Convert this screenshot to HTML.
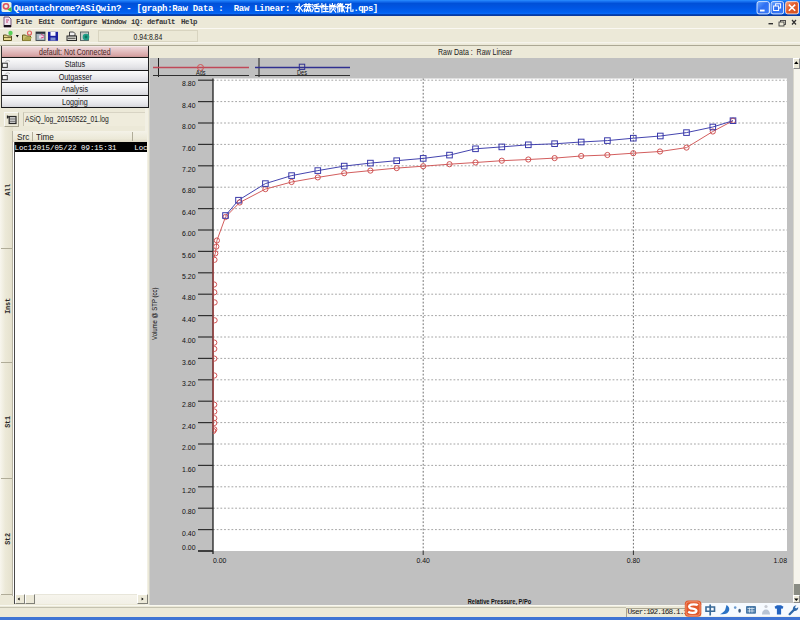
<!DOCTYPE html>
<html><head><meta charset="utf-8">
<style>
*{margin:0;padding:0;box-sizing:border-box}
html,body{width:800px;height:620px;overflow:hidden;background:#ece9d8;font-family:"Liberation Sans",sans-serif;position:relative}
.a{position:absolute}
#title{left:0;top:0;width:800px;height:15.5px;background:linear-gradient(#2a8eff 0px,#1670f0 1.5px,#0050d8 3.5px,#0056e4 8px,#0060f0 12px,#0868f6 13.5px,#0040b0 14.6px,#0a3aa0 15.5px)}
#ttext{left:13.5px;top:2.5px;font-family:"Liberation Mono",monospace;font-weight:bold;font-size:9px;line-height:13px;color:#fff;white-space:pre;letter-spacing:-0.28px}
.tbtn{top:1.5px;width:13px;height:12.5px;border:1px solid #e8f0ff;border-radius:2px;background:linear-gradient(135deg,#5b9bff,#1e5ee8)}
#menubar{left:0;top:15.5px;width:800px;height:13.5px;background:#ece9d8}
.mn{top:15.3px;font-family:"Liberation Mono",monospace;font-weight:bold;font-size:7.4px;line-height:14px;color:#383838;white-space:pre;letter-spacing:-0.44px}
#toolbar{left:0;top:29px;width:800px;height:17px;background:linear-gradient(#ece9d8 13px,#f6f4ec 13.5px,#ece9d8 15px);border-bottom:1px solid #aca894}
.btn{left:0.8px;width:148.4px;height:12.5px;border-left:1.2px solid #303030;border-right:1.4px solid #202020;border-bottom:1.3px solid #181818;background:linear-gradient(#fbfbfb,#f0f0f2 40%,#e2e2e6 80%,#d4d4d8);text-align:center;line-height:8.6px}
.cx{display:inline-block;font-size:8.4px;color:#202020;transform:scaleX(.86);transform-origin:50% 50%;white-space:pre}
div.a.cx{transform-origin:0 50%}
.tab{font-family:"Liberation Mono",monospace;font-weight:bold;font-size:6.8px;color:#282828;white-space:pre;transform:translate(-50%,-50%) rotate(-90deg);letter-spacing:-0.2px}
.sbb{border:1px solid #fff;border-right-color:#808078;border-bottom-color:#808078;background:#ece9d8}
.lbl{font-size:7.6px;color:#202020}
svg text.al{font-family:"Liberation Sans",sans-serif;font-size:6.9px;font-weight:normal;fill:#101010}
svg text.b{font-weight:bold}
</style></head><body>
<div class="a" id="title"></div>

<div class="a" id="ttext">Quantachrome?ASiQwin? - [graph:Raw Data :  Raw Linear: </div>
<div class="a tbtn" style="left:757px"></div>
<div class="a tbtn" style="left:771px"></div>
<div class="a tbtn" style="left:785.5px;background:linear-gradient(135deg,#f08050,#d84818)"></div>

<div class="a" id="menubar"></div>
<div class="a mn" style="left:16px">File</div>
<div class="a mn" style="left:38.5px">Edit</div>
<div class="a mn" style="left:61px">Configure</div>
<div class="a mn" style="left:102px">Window</div>
<div class="a mn" style="left:131px">iQ: default</div>
<div class="a mn" style="left:181px">Help</div>

<div class="a" id="toolbar"></div>
<div class="a" style="left:0;top:28.3px;width:800px;height:0.8px;background:#faf8f2"></div>
<svg class="a" style="left:0;top:0" width="800" height="46" viewBox="0 0 800 46">
<!-- app icon -->
<rect x="1.5" y="2" width="10" height="10" rx="1.5" fill="#e8f4e8"/>
<path d="M7 9.5 L11.5 12 L11.5 7 Z" fill="#40c040"/>
<circle cx="6" cy="6.3" r="2.6" fill="none" stroke="#e05060" stroke-width="1.6"/>
<!-- CJK approximations -->
<g fill="none" stroke="#fff" stroke-width="1.15" stroke-linecap="square">
<path transform="translate(295.2 3.6)" d="M4 0.5v7.5l-1-0.8M0.5 3h2.5l-2.5 3.5M7.5 2l-2.3 1.8M4.3 3.5l3.2 4"/>
<path transform="translate(303.5 3.6)" d="M0.5 1h7M2.5 0v2M5.5 0v2M1 2.8h6l-1.5 1.3M4 3v3.5l-0.8-0.5M1.8 4.2l-1 1.5M6 4.2l1.2 1.5M0.6 6.5h6.8M1 8l0.5-0.8M3 8l0.3-0.8M5 7.2l0.3 0.8M7 7.2l0.5 0.8"/>
<path transform="translate(311.8 3.6)" d="M0.5 0.8l1 0.8M0.3 3.2l1 0.8M0.3 8l1.3-2.8M6.8 0.3l-4 1M2.5 2.8h5.5M5 1v3M3.2 4.8h4v3.2h-4z"/>
<path transform="translate(320.1 3.6)" d="M1.8 0v8.5M0.4 2.5l0.6 1.5M3 2l-0.6 1.2M4 1.5l-0.8 2M3.5 3h4.3M5.6 0.5v7.5M3.8 5.3h3.8M3.2 8h5"/>
<path transform="translate(328.4 3.6)" d="M4 0v2M1.5 0.8v1.2h5v-1.2M0.8 3h7M1.5 3v5.5M4.8 3.5v1.8l-2.2 3.2M4.8 5.3l2.5 3.2M3 4.5l-0.5 1M6.5 4.5l0.5 1"/>
<path transform="translate(336.7 3.6)" d="M1.5 0l-1.2 1.5M1.8 2l-1.5 2M1.2 3.3v5.2M2.6 0.5v1.5h2.2v-1.5M3.7 0v2M2.4 3h2.6M2.8 4.5v3.5M4.5 4.5v3M6 0.3l-0.8 2.5h2.8M6.8 2.8l-1.5 5.5M5.6 4.3l2.2 4"/>
<path transform="translate(345.0 3.6)" d="M0.6 0.8h4l-2 1.8M2.6 2.6v5.6l-1-0.6M0.3 4.3h4.5M5.8 0v7.6h2.2v-1.5"/>
</g>
<text x="353.5" y="10.8" font-family="Liberation Mono" font-weight="bold" font-size="9" letter-spacing="-0.6" fill="#fff">.qps]</text>
<!-- title buttons -->
<defs>
<linearGradient id="gb" x1="0" y1="0" x2="1" y2="1"><stop offset="0" stop-color="#6aa8ff"/><stop offset=".45" stop-color="#2f6ff2"/><stop offset="1" stop-color="#3a7cf8"/></linearGradient>
<linearGradient id="gr" x1="0" y1="0" x2="1" y2="1"><stop offset="0" stop-color="#f4a080"/><stop offset=".45" stop-color="#e25a28"/><stop offset="1" stop-color="#d05020"/></linearGradient>
</defs>
<rect x="757" y="1.6" width="12.3" height="12.3" rx="2" fill="url(#gb)" stroke="#e0ecff" stroke-width="0.9"/>
<rect x="760" y="9.6" width="4.6" height="1.9" fill="#fff"/>
<rect x="771" y="1.6" width="12.6" height="12.3" rx="2" fill="url(#gb)" stroke="#e0ecff" stroke-width="0.9"/>
<rect x="775.6" y="3.8" width="5" height="4.2" fill="none" stroke="#fff" stroke-width="1"/>
<rect x="773.6" y="6" width="5" height="4.5" fill="#3070f0" stroke="#fff" stroke-width="1"/>
<rect x="785.6" y="1.6" width="12.8" height="12.3" rx="2" fill="url(#gr)" stroke="#f8e0d8" stroke-width="0.9"/>
<path d="M788.8 4.6l6.4 6.2M795.2 4.6l-6.4 6.2" stroke="#fff" stroke-width="1.6"/>
<!-- menu icon -->
<path d="M4 17h5l2 2v8h-7z" fill="#f0e4f0" stroke="#503060" stroke-width="0.8"/>
<rect x="4" y="25" width="7" height="2" fill="#181018"/>
<path d="M6 20h3M6 22h2" stroke="#c04070" stroke-width="1"/>
<!-- MDI buttons -->
<rect x="768.5" y="23" width="4.5" height="1.4" fill="#303030"/>
<rect x="780.5" y="20.5" width="5" height="4" fill="none" stroke="#404040" stroke-width="0.9"/>
<rect x="779" y="22" width="5" height="4" fill="#ece9d8" stroke="#404040" stroke-width="0.9"/>
<path d="M792 20l4 4.5M796 20l-4 4.5" stroke="#303030" stroke-width="1.2"/>
<!-- toolbar icons -->
<path d="M3.5 35h3l1 1h4v4.5h-8z" fill="#e8d890" stroke="#58501c" stroke-width="1"/>
<path d="M4 37.5h8" stroke="#58501c" stroke-width="0.8"/>
<circle cx="10.5" cy="33" r="2.2" fill="#58d058"/>
<path d="M15.8 35h3l-1.5 2.6z" fill="#101010"/>
<path d="M22.5 35h3l1 1h4v4.5h-8z" fill="#c8c070" stroke="#686020" stroke-width="1"/>
<path d="M23 40.5l2.5-3.5h6.5l-2 3.5z" fill="#b0a850"/>
<circle cx="29.5" cy="33" r="2" fill="none" stroke="#e06060" stroke-width="1.2"/>
<rect x="36" y="32" width="9" height="8.5" fill="#a8b8c0" stroke="#404850" stroke-width="0.9"/>
<rect x="36" y="32" width="9" height="1.8" fill="#283038"/>
<path d="M39 35.5h5v3h-5z" fill="#f0d8e8"/>
<path d="M41 34l3 2M41 38l3-1" stroke="#d04080" stroke-width="0.9"/>
<rect x="48" y="31.8" width="10" height="9" fill="#1a20a0"/>
<rect x="50.5" y="32" width="5" height="3.8" fill="#f8f8ff"/>
<rect x="50.5" y="37.5" width="5" height="3" fill="#8090d0"/>
<path d="M69.5 32h4l1.5 1.5v2.5h-5.5z" fill="#f0f0f0" stroke="#303030" stroke-width="0.9"/>
<rect x="67" y="36" width="9.5" height="4.5" fill="#d8d8d0" stroke="#282828" stroke-width="1"/>
<path d="M68 38.3h7.5" stroke="#282828" stroke-width="0.8"/>
<rect x="80.5" y="32" width="8" height="8.5" fill="#c8ccc8" stroke="#506060" stroke-width="0.9"/>
<circle cx="86" cy="37" r="3.3" fill="#20a088"/>
<circle cx="86" cy="37" r="1.4" fill="#107060"/>
</svg>
<div class="a" style="left:98px;top:30px;width:100px;height:12px;border:1px solid #d8d4c0;background:#ebe8d6;text-align:center;line-height:8.4px"><span class="cx" style="font-size:8.6px;transform:scaleX(.8)">0.94:8.84</span></div>

<!-- left panel -->
<div class="a" style="left:0;top:46px;width:149px;height:559px;background:#ece9d8"></div>
<div class="a" style="left:145px;top:108px;width:3px;height:497px;background:#f2f0e4"></div>
<div class="a btn" style="top:45.9px;height:12.1px;background:linear-gradient(#f8f0f0 0px,#ecd4d6 1.5px,#e4c0c2 45%,#d8a6a6 85%,#c89494)"><span class="cx" style="transform:scaleX(.835);color:#4a2424">default: Not Connected</span></div>
<div class="a btn" style="top:58px"><span class="cx">Status</span></div>
<div class="a btn" style="top:70.5px"><span class="cx">Outgasser</span></div>
<div class="a btn" style="top:83px"><span class="cx">Analysis</span></div>
<div class="a btn" style="top:95.5px"><span class="cx">Logging</span></div>
<svg class="a" style="left:0;top:45px" width="20" height="40" viewBox="0 45 20 40">
<rect x="2.3" y="63.2" width="5" height="4.2" fill="#f4f4f4" stroke="#303030" stroke-width="1"/>
<path d="M5 62.5a3 3 0 0 1 5 -1" fill="none" stroke="#b0b0b0" stroke-width="0.8"/>
<rect x="2.3" y="75.5" width="5" height="4.2" fill="#f4f4f4" stroke="#303030" stroke-width="1"/>
<path d="M5 74.8a3 3 0 0 1 5 -1" fill="none" stroke="#b0b0b0" stroke-width="0.8"/>
</svg>

<div class="a" style="left:4px;top:111.5px;width:15px;height:15px;border:1px solid #f8f8f4;border-right-color:#a8a490;border-bottom-color:#a8a490"></div>
<svg class="a" style="left:0;top:106px" width="22" height="22" viewBox="0 106 22 22">
<rect x="9.2" y="116.5" width="6.8" height="7" fill="#d8d8d8" stroke="#282828" stroke-width="1.2"/>
<path d="M7.5 115.5v3M7.5 116.8h2" stroke="#282828" stroke-width="1.3"/>
<path d="M10 119h5.5M10 121.3h5.5" stroke="#505050" stroke-width="0.8"/>
</svg>
<div class="a" style="left:23px;top:112px;width:122px;height:14px;background:#efecdc;border-left:1px solid #c8c4b0;border-top:1px solid #d8d4c4"></div>
<div class="a cx" style="left:24.5px;top:113px;line-height:12px;transform:scaleX(.80)">ASiQ_log_20150522_01.log</div>

<!-- tabs -->
<div class="a" style="left:0;top:127px;width:13px;height:468px;background:linear-gradient(90deg,#f8f6ee,#ece9d8 40%,#e4e0cc)"></div>
<div class="a" style="left:1px;top:247.5px;width:11.5px;height:1.2px;background:#b0ac98"></div>
<div class="a" style="left:1px;top:362px;width:11.5px;height:1.2px;background:#b0ac98"></div>
<div class="a" style="left:1px;top:478px;width:11.5px;height:1.2px;background:#b0ac98"></div>
<div class="a" style="left:1px;top:594px;width:11.5px;height:1.2px;background:#b0ac98"></div>
<div class="a tab" style="left:8px;top:190px">All</div>
<div class="a tab" style="left:8px;top:306px">Inst</div>
<div class="a tab" style="left:8px;top:422px">St1</div>
<div class="a tab" style="left:8px;top:538.5px">St2</div>

<!-- list -->
<div class="a" style="left:12.3px;top:130.5px;width:135px;height:465px;background:#fff;border-left:1px solid #b8b4a4"></div>
<div class="a" style="left:14px;top:141px;width:1.1px;height:463px;background:#484848"></div>
<div class="a" style="left:13px;top:130.5px;width:134px;height:11px;background:linear-gradient(#f4f2e8,#ece9d8 70%,#dedac6)"></div>
<div class="a cx" style="left:17px;top:131.5px;line-height:10px;transform:scaleX(.98)">Src</div>
<div class="a" style="left:32px;top:132px;width:1.2px;height:9px;background:#b0ac98"></div>
<div class="a cx" style="left:36px;top:131.5px;line-height:10px;transform:scaleX(.98)">Time</div>
<div class="a" style="left:132px;top:132px;width:1.2px;height:9px;background:#b0ac98"></div>
<div class="a" style="left:14.7px;top:141.5px;width:132px;height:1px;background:#807c70"></div>
<div class="a" style="left:14.7px;top:142.4px;width:132px;height:10px;background:#000"></div>
<div class="a" style="left:14.5px;top:142.6px;font-family:'Liberation Mono',monospace;font-size:7.4px;line-height:10px;color:#fff;white-space:pre;font-weight:normal;letter-spacing:0px">Loc12015/05/22 09:15:31    Loc</div>

<!-- list h scrollbar -->
<div class="a" style="left:14.7px;top:593.5px;width:132.8px;height:10.3px;background:linear-gradient(#f6f4ec,#f2f0e6);border-top:1px solid #e8e6da"></div>
<div class="a sbb" style="left:14.5px;top:594px;width:10px;height:9.8px"></div>
<div class="a sbb" style="left:24.5px;top:594px;width:10px;height:9.8px"></div>
<div class="a sbb" style="left:137px;top:594px;width:10.5px;height:9.8px"></div>
<svg class="a" style="left:0;top:590px" width="150" height="14" viewBox="0 590 150 14">
<path d="M17.6 599l2-1.6v3.2z" fill="#000"/>
<path d="M143.6 599l-2-1.6v3.2z" fill="#000"/>
</svg>

<!-- chart area -->
<div class="a" style="left:149px;top:46px;width:651px;height:12px;background:#ece9d8"></div>
<div class="a cx" style="left:438.4px;top:46.5px;line-height:11px;transform:scaleX(.838)">Raw Data :  Raw Linear</div>
<div class="a" style="left:149px;top:58px;width:643.5px;height:547px;background:#c0c0c0;border-left:1.2px solid #d4d4cc"></div>
<svg class="a" style="left:0;top:0" width="800" height="620" viewBox="0 0 800 620">
<rect x="213.0" y="78.5" width="574.0" height="472.5" fill="#fff"/>
<line x1="213.0" y1="529.6" x2="787.0" y2="529.6" stroke="#a4a4a4" stroke-width="1" stroke-dasharray="1.8 1.9"/>
<line x1="213.0" y1="508.2" x2="787.0" y2="508.2" stroke="#a4a4a4" stroke-width="1" stroke-dasharray="1.8 1.9"/>
<line x1="213.0" y1="486.8" x2="787.0" y2="486.8" stroke="#a4a4a4" stroke-width="1" stroke-dasharray="1.8 1.9"/>
<line x1="213.0" y1="465.4" x2="787.0" y2="465.4" stroke="#a4a4a4" stroke-width="1" stroke-dasharray="1.8 1.9"/>
<line x1="213.0" y1="444.0" x2="787.0" y2="444.0" stroke="#a4a4a4" stroke-width="1" stroke-dasharray="1.8 1.9"/>
<line x1="213.0" y1="422.6" x2="787.0" y2="422.6" stroke="#a4a4a4" stroke-width="1" stroke-dasharray="1.8 1.9"/>
<line x1="213.0" y1="401.2" x2="787.0" y2="401.2" stroke="#a4a4a4" stroke-width="1" stroke-dasharray="1.8 1.9"/>
<line x1="213.0" y1="379.8" x2="787.0" y2="379.8" stroke="#a4a4a4" stroke-width="1" stroke-dasharray="1.8 1.9"/>
<line x1="213.0" y1="358.4" x2="787.0" y2="358.4" stroke="#a4a4a4" stroke-width="1" stroke-dasharray="1.8 1.9"/>
<line x1="213.0" y1="337.0" x2="787.0" y2="337.0" stroke="#a4a4a4" stroke-width="1" stroke-dasharray="1.8 1.9"/>
<line x1="213.0" y1="315.6" x2="787.0" y2="315.6" stroke="#a4a4a4" stroke-width="1" stroke-dasharray="1.8 1.9"/>
<line x1="213.0" y1="294.2" x2="787.0" y2="294.2" stroke="#a4a4a4" stroke-width="1" stroke-dasharray="1.8 1.9"/>
<line x1="213.0" y1="272.8" x2="787.0" y2="272.8" stroke="#a4a4a4" stroke-width="1" stroke-dasharray="1.8 1.9"/>
<line x1="213.0" y1="251.4" x2="787.0" y2="251.4" stroke="#a4a4a4" stroke-width="1" stroke-dasharray="1.8 1.9"/>
<line x1="213.0" y1="230.0" x2="787.0" y2="230.0" stroke="#a4a4a4" stroke-width="1" stroke-dasharray="1.8 1.9"/>
<line x1="213.0" y1="208.6" x2="787.0" y2="208.6" stroke="#a4a4a4" stroke-width="1" stroke-dasharray="1.8 1.9"/>
<line x1="213.0" y1="187.2" x2="787.0" y2="187.2" stroke="#a4a4a4" stroke-width="1" stroke-dasharray="1.8 1.9"/>
<line x1="213.0" y1="165.8" x2="787.0" y2="165.8" stroke="#a4a4a4" stroke-width="1" stroke-dasharray="1.8 1.9"/>
<line x1="213.0" y1="144.4" x2="787.0" y2="144.4" stroke="#a4a4a4" stroke-width="1" stroke-dasharray="1.8 1.9"/>
<line x1="213.0" y1="123.0" x2="787.0" y2="123.0" stroke="#a4a4a4" stroke-width="1" stroke-dasharray="1.8 1.9"/>
<line x1="213.0" y1="101.6" x2="787.0" y2="101.6" stroke="#a4a4a4" stroke-width="1" stroke-dasharray="1.8 1.9"/>
<line x1="213.0" y1="80.2" x2="787.0" y2="80.2" stroke="#a4a4a4" stroke-width="1" stroke-dasharray="1.8 1.9"/>
<line x1="423.2" y1="78.5" x2="423.2" y2="551.0" stroke="#707070" stroke-width="1" stroke-dasharray="1.8 1.8"/>
<line x1="633.4" y1="78.5" x2="633.4" y2="551.0" stroke="#707070" stroke-width="1" stroke-dasharray="1.8 1.8"/>
<line x1="213.0" y1="78.5" x2="213.0" y2="554.0" stroke="#202020" stroke-width="1.3"/>
<line x1="198.0" y1="551.0" x2="213.0" y2="551.0" stroke="#202020" stroke-width="1.3"/>
<line x1="198.0" y1="551.0" x2="213.0" y2="551.0" stroke="#303030" stroke-width="1.2"/>
<text x="195.5" y="550.2" text-anchor="end" class="al">0.00</text>
<line x1="198.0" y1="529.6" x2="213.0" y2="529.6" stroke="#303030" stroke-width="1.2"/>
<text x="195.5" y="535.7" text-anchor="end" class="al">0.40</text>
<line x1="198.0" y1="508.2" x2="213.0" y2="508.2" stroke="#303030" stroke-width="1.2"/>
<text x="195.5" y="514.3" text-anchor="end" class="al">0.80</text>
<line x1="198.0" y1="486.8" x2="213.0" y2="486.8" stroke="#303030" stroke-width="1.2"/>
<text x="195.5" y="492.9" text-anchor="end" class="al">1.20</text>
<line x1="198.0" y1="465.4" x2="213.0" y2="465.4" stroke="#303030" stroke-width="1.2"/>
<text x="195.5" y="471.5" text-anchor="end" class="al">1.60</text>
<line x1="198.0" y1="444.0" x2="213.0" y2="444.0" stroke="#303030" stroke-width="1.2"/>
<text x="195.5" y="450.1" text-anchor="end" class="al">2.00</text>
<line x1="198.0" y1="422.6" x2="213.0" y2="422.6" stroke="#303030" stroke-width="1.2"/>
<text x="195.5" y="428.7" text-anchor="end" class="al">2.40</text>
<line x1="198.0" y1="401.2" x2="213.0" y2="401.2" stroke="#303030" stroke-width="1.2"/>
<text x="195.5" y="407.3" text-anchor="end" class="al">2.80</text>
<line x1="198.0" y1="379.8" x2="213.0" y2="379.8" stroke="#303030" stroke-width="1.2"/>
<text x="195.5" y="385.9" text-anchor="end" class="al">3.20</text>
<line x1="198.0" y1="358.4" x2="213.0" y2="358.4" stroke="#303030" stroke-width="1.2"/>
<text x="195.5" y="364.5" text-anchor="end" class="al">3.60</text>
<line x1="198.0" y1="337.0" x2="213.0" y2="337.0" stroke="#303030" stroke-width="1.2"/>
<text x="195.5" y="343.1" text-anchor="end" class="al">4.00</text>
<line x1="198.0" y1="315.6" x2="213.0" y2="315.6" stroke="#303030" stroke-width="1.2"/>
<text x="195.5" y="321.7" text-anchor="end" class="al">4.40</text>
<line x1="198.0" y1="294.2" x2="213.0" y2="294.2" stroke="#303030" stroke-width="1.2"/>
<text x="195.5" y="300.3" text-anchor="end" class="al">4.80</text>
<line x1="198.0" y1="272.8" x2="213.0" y2="272.8" stroke="#303030" stroke-width="1.2"/>
<text x="195.5" y="278.9" text-anchor="end" class="al">5.20</text>
<line x1="198.0" y1="251.4" x2="213.0" y2="251.4" stroke="#303030" stroke-width="1.2"/>
<text x="195.5" y="257.5" text-anchor="end" class="al">5.60</text>
<line x1="198.0" y1="230.0" x2="213.0" y2="230.0" stroke="#303030" stroke-width="1.2"/>
<text x="195.5" y="236.1" text-anchor="end" class="al">6.00</text>
<line x1="198.0" y1="208.6" x2="213.0" y2="208.6" stroke="#303030" stroke-width="1.2"/>
<text x="195.5" y="214.7" text-anchor="end" class="al">6.40</text>
<line x1="198.0" y1="187.2" x2="213.0" y2="187.2" stroke="#303030" stroke-width="1.2"/>
<text x="195.5" y="193.3" text-anchor="end" class="al">6.80</text>
<line x1="198.0" y1="165.8" x2="213.0" y2="165.8" stroke="#303030" stroke-width="1.2"/>
<text x="195.5" y="171.9" text-anchor="end" class="al">7.20</text>
<line x1="198.0" y1="144.4" x2="213.0" y2="144.4" stroke="#303030" stroke-width="1.2"/>
<text x="195.5" y="150.5" text-anchor="end" class="al">7.60</text>
<line x1="198.0" y1="123.0" x2="213.0" y2="123.0" stroke="#303030" stroke-width="1.2"/>
<text x="195.5" y="129.1" text-anchor="end" class="al">8.00</text>
<line x1="198.0" y1="101.6" x2="213.0" y2="101.6" stroke="#303030" stroke-width="1.2"/>
<text x="195.5" y="107.7" text-anchor="end" class="al">8.40</text>
<line x1="198.0" y1="80.2" x2="213.0" y2="80.2" stroke="#303030" stroke-width="1.2"/>
<text x="195.5" y="86.3" text-anchor="end" class="al">8.80</text>
<line x1="423.2" y1="551.0" x2="423.2" y2="555.0" stroke="#303030" stroke-width="1"/>
<line x1="633.4" y1="551.0" x2="633.4" y2="555.0" stroke="#303030" stroke-width="1"/>
<text x="213.0" y="562.6" class="al">0.00</text>
<text x="423.2" y="562.6" text-anchor="middle" class="al">0.40</text>
<text x="633.4" y="562.6" text-anchor="middle" class="al">0.80</text>
<text x="787" y="562.6" text-anchor="end" class="al">1.08</text>
<text x="467.7" y="603.5" textLength="63.5" lengthAdjust="spacingAndGlyphs" class="al b">Relative Pressure, P/Po</text>
<text transform="translate(157.3 340) rotate(-90)" textLength="52.5" lengthAdjust="spacingAndGlyphs" class="al">Volume @ STP (cc)</text>
<clipPath id="pc"><rect x="212.8" y="76" width="580" height="476"/></clipPath><g clip-path="url(#pc)">
<polyline points="213.1,431.0 213.1,429.4 213.1,423.0 213.1,418.2 213.1,411.5 213.1,404.7 213.1,375.5 213.1,358.6 213.1,348.9 213.1,342.6 213.1,320.3 213.1,302.4 213.1,292.3 213.1,284.5 213.1,259.8 215.3,253.4 216.3,246.6 216.9,240.5 225.5,217.0 239.7,202.5 265.4,189.1 291.6,182.0 317.8,177.4 344.2,173.2 370.4,170.6 396.7,168.1 423.2,166.2 449.5,164.2 475.5,162.5 501.8,160.7 528.3,159.5 554.6,158.1 581.2,156.0 607.4,155.0 633.3,153.2 660.0,151.5 686.5,147.6 712.8,131.5 733.0,120.7" fill="none" stroke="#d05454" stroke-width="0.95"/>
<polyline points="225.5,215.5 238.5,200.2 265.4,183.6 291.6,175.6 317.8,170.6 344.2,166.1 370.4,163.1 396.7,160.7 423.2,158.4 449.5,155.1 475.5,148.8 501.8,146.9 528.3,144.8 554.6,143.8 581.2,142.0 607.4,140.6 633.3,138.2 660.3,136.0 686.5,132.6 712.8,127.0 733.0,120.7" fill="none" stroke="#3a3aaa" stroke-width="0.95"/>
<circle cx="213.3" cy="431.0" r="2.6" fill="none" stroke="#d05454" stroke-width="1"/>
<circle cx="214.3" cy="429.4" r="2.6" fill="none" stroke="#d05454" stroke-width="1"/>
<circle cx="214.3" cy="423.0" r="2.6" fill="none" stroke="#d05454" stroke-width="1"/>
<circle cx="214.3" cy="418.2" r="2.6" fill="none" stroke="#d05454" stroke-width="1"/>
<circle cx="214.3" cy="411.5" r="2.6" fill="none" stroke="#d05454" stroke-width="1"/>
<circle cx="214.3" cy="404.7" r="2.6" fill="none" stroke="#d05454" stroke-width="1"/>
<circle cx="214.3" cy="375.5" r="2.6" fill="none" stroke="#d05454" stroke-width="1"/>
<circle cx="214.3" cy="358.6" r="2.6" fill="none" stroke="#d05454" stroke-width="1"/>
<circle cx="214.3" cy="348.9" r="2.6" fill="none" stroke="#d05454" stroke-width="1"/>
<circle cx="214.3" cy="342.6" r="2.6" fill="none" stroke="#d05454" stroke-width="1"/>
<circle cx="214.6" cy="320.3" r="2.6" fill="none" stroke="#d05454" stroke-width="1"/>
<circle cx="214.6" cy="302.4" r="2.6" fill="none" stroke="#d05454" stroke-width="1"/>
<circle cx="214.3" cy="292.3" r="2.6" fill="none" stroke="#d05454" stroke-width="1"/>
<circle cx="214.1" cy="284.5" r="2.6" fill="none" stroke="#d05454" stroke-width="1"/>
<circle cx="214.5" cy="259.8" r="2.6" fill="none" stroke="#d05454" stroke-width="1"/>
<circle cx="215.3" cy="253.4" r="2.6" fill="none" stroke="#d05454" stroke-width="1"/>
<circle cx="216.3" cy="246.6" r="2.6" fill="none" stroke="#d05454" stroke-width="1"/>
<circle cx="216.9" cy="240.5" r="2.6" fill="none" stroke="#d05454" stroke-width="1"/>
<circle cx="225.5" cy="217.0" r="2.6" fill="none" stroke="#d05454" stroke-width="1"/>
<circle cx="239.7" cy="202.5" r="2.6" fill="none" stroke="#d05454" stroke-width="1"/>
<circle cx="265.4" cy="189.1" r="2.6" fill="none" stroke="#d05454" stroke-width="1"/>
<circle cx="291.6" cy="182.0" r="2.6" fill="none" stroke="#d05454" stroke-width="1"/>
<circle cx="317.8" cy="177.4" r="2.6" fill="none" stroke="#d05454" stroke-width="1"/>
<circle cx="344.2" cy="173.2" r="2.6" fill="none" stroke="#d05454" stroke-width="1"/>
<circle cx="370.4" cy="170.6" r="2.6" fill="none" stroke="#d05454" stroke-width="1"/>
<circle cx="396.7" cy="168.1" r="2.6" fill="none" stroke="#d05454" stroke-width="1"/>
<circle cx="423.2" cy="166.2" r="2.6" fill="none" stroke="#d05454" stroke-width="1"/>
<circle cx="449.5" cy="164.2" r="2.6" fill="none" stroke="#d05454" stroke-width="1"/>
<circle cx="475.5" cy="162.5" r="2.6" fill="none" stroke="#d05454" stroke-width="1"/>
<circle cx="501.8" cy="160.7" r="2.6" fill="none" stroke="#d05454" stroke-width="1"/>
<circle cx="528.3" cy="159.5" r="2.6" fill="none" stroke="#d05454" stroke-width="1"/>
<circle cx="554.6" cy="158.1" r="2.6" fill="none" stroke="#d05454" stroke-width="1"/>
<circle cx="581.2" cy="156.0" r="2.6" fill="none" stroke="#d05454" stroke-width="1"/>
<circle cx="607.4" cy="155.0" r="2.6" fill="none" stroke="#d05454" stroke-width="1"/>
<circle cx="633.3" cy="153.2" r="2.6" fill="none" stroke="#d05454" stroke-width="1"/>
<circle cx="660.0" cy="151.5" r="2.6" fill="none" stroke="#d05454" stroke-width="1"/>
<circle cx="686.5" cy="147.6" r="2.6" fill="none" stroke="#d05454" stroke-width="1"/>
<circle cx="712.8" cy="131.5" r="2.6" fill="none" stroke="#d05454" stroke-width="1"/>
<circle cx="733.0" cy="120.7" r="2.6" fill="none" stroke="#d05454" stroke-width="1"/>
<rect x="222.7" y="212.7" width="5.6" height="5.6" fill="none" stroke="#3a3aaa" stroke-width="1"/>
<rect x="235.7" y="197.4" width="5.6" height="5.6" fill="none" stroke="#3a3aaa" stroke-width="1"/>
<rect x="262.6" y="180.8" width="5.6" height="5.6" fill="none" stroke="#3a3aaa" stroke-width="1"/>
<rect x="288.8" y="172.8" width="5.6" height="5.6" fill="none" stroke="#3a3aaa" stroke-width="1"/>
<rect x="315.0" y="167.8" width="5.6" height="5.6" fill="none" stroke="#3a3aaa" stroke-width="1"/>
<rect x="341.4" y="163.3" width="5.6" height="5.6" fill="none" stroke="#3a3aaa" stroke-width="1"/>
<rect x="367.6" y="160.3" width="5.6" height="5.6" fill="none" stroke="#3a3aaa" stroke-width="1"/>
<rect x="393.9" y="157.9" width="5.6" height="5.6" fill="none" stroke="#3a3aaa" stroke-width="1"/>
<rect x="420.4" y="155.6" width="5.6" height="5.6" fill="none" stroke="#3a3aaa" stroke-width="1"/>
<rect x="446.7" y="152.3" width="5.6" height="5.6" fill="none" stroke="#3a3aaa" stroke-width="1"/>
<rect x="472.7" y="146.0" width="5.6" height="5.6" fill="none" stroke="#3a3aaa" stroke-width="1"/>
<rect x="499.0" y="144.1" width="5.6" height="5.6" fill="none" stroke="#3a3aaa" stroke-width="1"/>
<rect x="525.5" y="142.0" width="5.6" height="5.6" fill="none" stroke="#3a3aaa" stroke-width="1"/>
<rect x="551.8" y="140.9" width="5.6" height="5.6" fill="none" stroke="#3a3aaa" stroke-width="1"/>
<rect x="578.4" y="139.2" width="5.6" height="5.6" fill="none" stroke="#3a3aaa" stroke-width="1"/>
<rect x="604.6" y="137.8" width="5.6" height="5.6" fill="none" stroke="#3a3aaa" stroke-width="1"/>
<rect x="630.5" y="135.4" width="5.6" height="5.6" fill="none" stroke="#3a3aaa" stroke-width="1"/>
<rect x="657.5" y="133.2" width="5.6" height="5.6" fill="none" stroke="#3a3aaa" stroke-width="1"/>
<rect x="683.7" y="129.8" width="5.6" height="5.6" fill="none" stroke="#3a3aaa" stroke-width="1"/>
<rect x="710.0" y="124.2" width="5.6" height="5.6" fill="none" stroke="#3a3aaa" stroke-width="1"/>
<rect x="730.2" y="117.9" width="5.6" height="5.6" fill="none" stroke="#3a3aaa" stroke-width="1"/>
</g>
<line x1="213.1" y1="258" x2="213.1" y2="431.5" stroke="#9c4c4c" stroke-width="1.4"/>
<line x1="158.5" y1="58" x2="158.5" y2="77" stroke="#202020" stroke-width="1"/>
<line x1="153" y1="67.5" x2="249" y2="67.5" stroke="#c04858" stroke-width="1.3"/>
<line x1="153" y1="75.5" x2="249" y2="75.5" stroke="#303030" stroke-width="1"/>
<circle cx="200.5" cy="67.5" r="3" fill="none" stroke="#d05454" stroke-width="1"/>
<text x="196" y="74.6" textLength="9.5" lengthAdjust="spacingAndGlyphs" class="al" style="font-size:6.6px">Ads</text>
<line x1="259" y1="58" x2="259" y2="77" stroke="#202020" stroke-width="1"/>
<line x1="255" y1="67.5" x2="350" y2="67.5" stroke="#303090" stroke-width="1.3"/>
<line x1="255" y1="75.5" x2="350" y2="75.5" stroke="#303030" stroke-width="1"/>
<rect x="299.3" y="64.2" width="5.4" height="5.2" fill="none" stroke="#303090" stroke-width="1"/>
<text x="297" y="74.6" textLength="10" lengthAdjust="spacingAndGlyphs" class="al" style="font-size:6.6px">Des</text>
</svg>

<!-- v scrollbar -->
<div class="a" style="left:792.5px;top:58px;width:7.5px;height:547px;background:#f6f4ec;border-left:1px solid #d8d6cc"></div>
<div class="a" style="left:792.5px;top:58px;width:7.5px;height:11px;background:#ece9d8;border:1px solid #fff;border-right-color:#888;border-bottom-color:#888"></div>
<svg class="a" style="left:790px;top:55px" width="10" height="16" viewBox="790 55 10 16"><path d="M796.3 61.3l-2.2 2.6h4.4z" fill="#000"/></svg>
<div class="a" style="left:793.5px;top:584px;width:6.5px;height:10.5px;background:#8a8c84"></div>
<div class="a" style="left:792.5px;top:594.5px;width:7.5px;height:8.5px;background:#ece9d8;border:1px solid #fff;border-right-color:#888;border-bottom-color:#888"></div>
<svg class="a" style="left:790px;top:592px" width="10" height="12" viewBox="790 592 10 12"><path d="M796.3 601l-2.2-2.4h4.4z" fill="#000"/></svg>

<!-- status bar -->
<div class="a" style="left:0;top:605px;width:800px;height:12px;background:#ece9d8;border-top:1px solid #f8f8f0"></div>
<div class="a" style="left:0;top:607px;width:626px;height:1px;background:#c4c2b0"></div>
<div class="a" style="left:626px;top:607.5px;width:60px;height:9.5px;border-left:1px solid #a8a490;border-top:1px solid #a8a490"></div>
<div class="a" style="left:627.5px;top:607px;font-family:'Liberation Mono',monospace;font-size:7.8px;line-height:10px;color:#202020;white-space:pre;letter-spacing:-0.95px">User:192.168.1.1</div>
<svg class="a" style="left:680px;top:598px" width="120" height="22" viewBox="680 598 120 22">
<rect x="701.5" y="603" width="98.5" height="13.5" fill="#f6faff"/>
<rect x="684.8" y="600.5" width="16.5" height="16.2" rx="3.5" fill="#e2582a"/>
<rect x="686" y="601.8" width="14" height="13.6" rx="2.8" fill="none" stroke="#f4a080" stroke-width="0.8"/>
<path d="M697.8 605.2c-1.2-1-6.8-1.3-8.3.3c-1.3 1.6.6 2.8 3 3.2c2.5.4 4.8 1.2 3.6 3c-1.2 1.6-5.8 1.3-7.9 0" fill="none" stroke="#fff" stroke-width="2.3"/>
<path d="M706 607h8.5v4.2h-8.5z" fill="none" stroke="#3a6a98" stroke-width="1.6"/>
<path d="M710.2 604.5v11" stroke="#3a6a98" stroke-width="1.7"/>
<path d="M726.5 605C731 607 731 615.5 720 614.2C722.5 612.8 724.5 611.5 725.3 609.5C725.8 608 726 606.5 726.5 605z" fill="#2a72c4"/>
<circle cx="735.2" cy="607.6" r="1.3" fill="#6a9ad0"/>
<ellipse cx="739.6" cy="610.8" rx="1.3" ry="2" fill="#3a5a80"/>
<rect x="746" y="606" width="10" height="7.8" rx="1" fill="#4a7aa8"/>
<path d="M747.5 608.5h7M747.5 611h7M749.5 607.5v5M752 607.5v5" stroke="#dbe8f4" stroke-width="0.8"/>
<circle cx="766" cy="606.5" r="1.6" fill="#c8ccd4"/>
<path d="M762 614.5c0-3 1.5-5 4-5s4 2 4 5z" fill="#b8c4d4"/>
<path d="M774.5 606.8l2.5-1.6h4l2.5 1.6-1.2 2.2-1.2-.6v6h-4.2v-6l-1.2.6z" fill="#2464c0"/>
<path d="M789.6 614.2l4.6-4.6" stroke="#3068a8" stroke-width="2.2" stroke-linecap="round"/><path d="M793 609.8c-.6-2.2.8-4.4 3.4-4.6l-1.5 2.1 1.2 1.3 2.2-1.3c.1 2.5-2.3 4.2-4.6 3.6z" fill="#3068a8"/>
</svg>
<div class="a" style="left:0;top:616.5px;width:800px;height:0.8px;background:#d8f0f8"></div>
<div class="a" style="left:0;top:617.2px;width:800px;height:2.8px;background:#3f74d4"></div>
</body></html>
